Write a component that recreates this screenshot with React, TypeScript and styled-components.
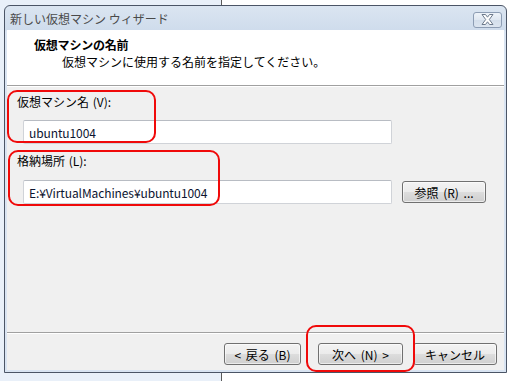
import React from "react";
import styled, { createGlobalStyle } from "styled-components";

const Global = createGlobalStyle`
  html, body { margin: 0; padding: 0; }
  body {
    width: 508px;
    height: 381px;
    overflow: hidden;
    font-family: "Noto Sans CJK JP", "Noto Sans", sans-serif;
    font-size: 12px;
    color: #000;
  }
`;

const Desktop = styled.div`
  width: 508px;
  height: 381px;
  box-sizing: border-box;
  padding: 5px 1px 8px 4px;
  background: linear-gradient(
    to right,
    #e9f0f9 0,
    #e9f0f9 221px,
    #5a5a5a 221px,
    #5a5a5a 222px,
    #ffffff 222px
  );
`;

const Window = styled.div`
  position: relative;
  height: 100%;
  box-sizing: border-box;
  border: 1px solid #4b5566;
  border-radius: 6px 6px 0 0;
  background: linear-gradient(#dbe5f1, #cfdcec 24px, #d9e4f2 25px, #d9e4f2);
  padding: 0 2px 2px 2px;
  display: flex;
  flex-direction: column;
`;

const TitleBar = styled.div`
  height: 24px;
  flex: none;
  display: flex;
  align-items: center;
  justify-content: space-between;
  padding: 0 2px 0 3px;
`;

const TitleText = styled.span`
  color: #4a4a4a;
  font-size: 12px;
  line-height: 16px;
  margin-top: 1px;
`;

const CloseButton = styled.div`
  width: 29px;
  height: 16px;
  margin-top: 3px;
  box-sizing: border-box;
  border: 1px solid #8d9db4;
  border-radius: 3px;
  background: linear-gradient(#eef3f9, #dfe7f1 50%, #d3deeb 51%, #dce5f0);
  display: flex;
  align-items: center;
  justify-content: center;
`;

const Client = styled.div`
  flex: 1;
  display: flex;
  flex-direction: column;
  background: #f0f0f0;
`;

const Header = styled.div`
  height: 56px;
  flex: none;
  background: #fff;
  box-sizing: border-box;
  padding: 7px 0 0 27px;
  border-bottom: 1px solid #a0a0a0;
`;

const HeaderTitle = styled.div`
  font-weight: bold;
  font-size: 12px;
  line-height: 16px;
  letter-spacing: -0.2px;
`;

const HeaderSub = styled.div`
  margin: 1px 0 0 28px;
  font-size: 12px;
  line-height: 16px;
`;

const Body = styled.div`
  flex: 1;
  border-top: 1px solid #fff;
  padding: 7px 0 0 10px;
  display: flex;
  flex-direction: column;
  border-bottom: 1px solid #a0a0a0;
`;

const Label = styled.div<{ $gap: number }>`
  line-height: 16px;
  margin-top: ${(p) => p.$gap}px;
  word-spacing: 1px;
`;

const FieldRow = styled.div<{ $gap: number }>`
  display: flex;
  align-items: center;
  gap: 10px;
  margin: ${(p) => p.$gap}px 0 0 6px;
`;

const TextBox = styled.div`
  width: 369px;
  height: 24px;
  box-sizing: border-box;
  background: #fff;
  border: 1px solid #d0d3d8;
  border-top-color: #b8bcc3;
  border-radius: 2px;
  display: flex;
  align-items: center;
  padding-left: 5px;
  color: #0c1430;
  font-size: 12px;
  letter-spacing: -0.1px;
`;

const PushButton = styled.div<{ $w: number }>`
  width: ${(p) => p.$w}px;
  height: 22px;
  box-sizing: border-box;
  border: 1px solid #707070;
  border-radius: 3px;
  background: linear-gradient(#f3f3f3, #ebebeb 50%, #dddddd 51%, #cfcfcf);
  box-shadow: inset 0 0 0 1px rgba(255, 255, 255, 0.6);
  display: flex;
  align-items: center;
  justify-content: center;
  font-size: 12px;
  word-spacing: 2px;
  color: #000;
`;

const Footer = styled.div`
  height: 37px;
  flex: none;
  border-top: 1px solid #fff;
  box-sizing: border-box;
  display: flex;
  justify-content: flex-end;
  align-items: flex-start;
  padding: 9px 7px 0 0;
`;

const Spacer = styled.div<{ $w: number }>`
  width: ${(p) => p.$w}px;
  flex: none;
`;

const Annotation = styled.div<{ $l: number; $t: number; $w: number; $h: number }>`
  position: absolute;
  left: ${(p) => p.$l}px;
  top: ${(p) => p.$t}px;
  width: ${(p) => p.$w}px;
  height: ${(p) => p.$h}px;
  box-sizing: border-box;
  border: 2px solid #f00a0a;
  border-radius: 10px;
  pointer-events: none;
`;

const CloseGlyph = () => (
  <svg width="13" height="11" viewBox="0 0 13 11">
    <path
      d="M1 0.5 H4.5 L6.5 3.2 L8.5 0.5 H12 L8.3 5.5 L12 10.5 H8.5 L6.5 7.8 L4.5 10.5 H1 L4.7 5.5 Z"
      fill="#ffffff"
      stroke="#6d7a8c"
      strokeWidth="1"
      strokeLinejoin="round"
    />
  </svg>
);

export default function App() {
  return (
    <>
      <Global />
      <Desktop>
        <Window>
          <TitleBar>
            <TitleText>新しい仮想マシン ウィザード</TitleText>
            <CloseButton>
              <CloseGlyph />
            </CloseButton>
          </TitleBar>
          <Client>
            <Header>
              <HeaderTitle>仮想マシンの名前</HeaderTitle>
              <HeaderSub>仮想マシンに使用する名前を指定してください。</HeaderSub>
            </Header>
            <Body>
              <Label $gap={0}>仮想マシン名 (V):</Label>
              <FieldRow $gap={10}>
                <TextBox>ubuntu1004</TextBox>
              </FieldRow>
              <Label $gap={9}>格納場所 (L):</Label>
              <FieldRow $gap={11}>
                <TextBox>E:¥VirtualMachines¥ubuntu1004</TextBox>
                <PushButton $w={84}>参照 (R) ...</PushButton>
              </FieldRow>
            </Body>
            <Footer>
              <PushButton $w={77}>&lt; 戻る (B)</PushButton>
              <Spacer $w={17} />
              <PushButton $w={85}>次へ (N) &gt;</PushButton>
              <Spacer $w={10} />
              <PushButton $w={84}>キャンセル</PushButton>
            </Footer>
          </Client>
          <Annotation $l={2} $t={84} $w={149} $h={53} />
          <Annotation $l={3} $t={144} $w={212} $h={56} />
          <Annotation $l={301} $t={319} $w={109} $h={47} />
        </Window>
      </Desktop>
    </>
  );
}
